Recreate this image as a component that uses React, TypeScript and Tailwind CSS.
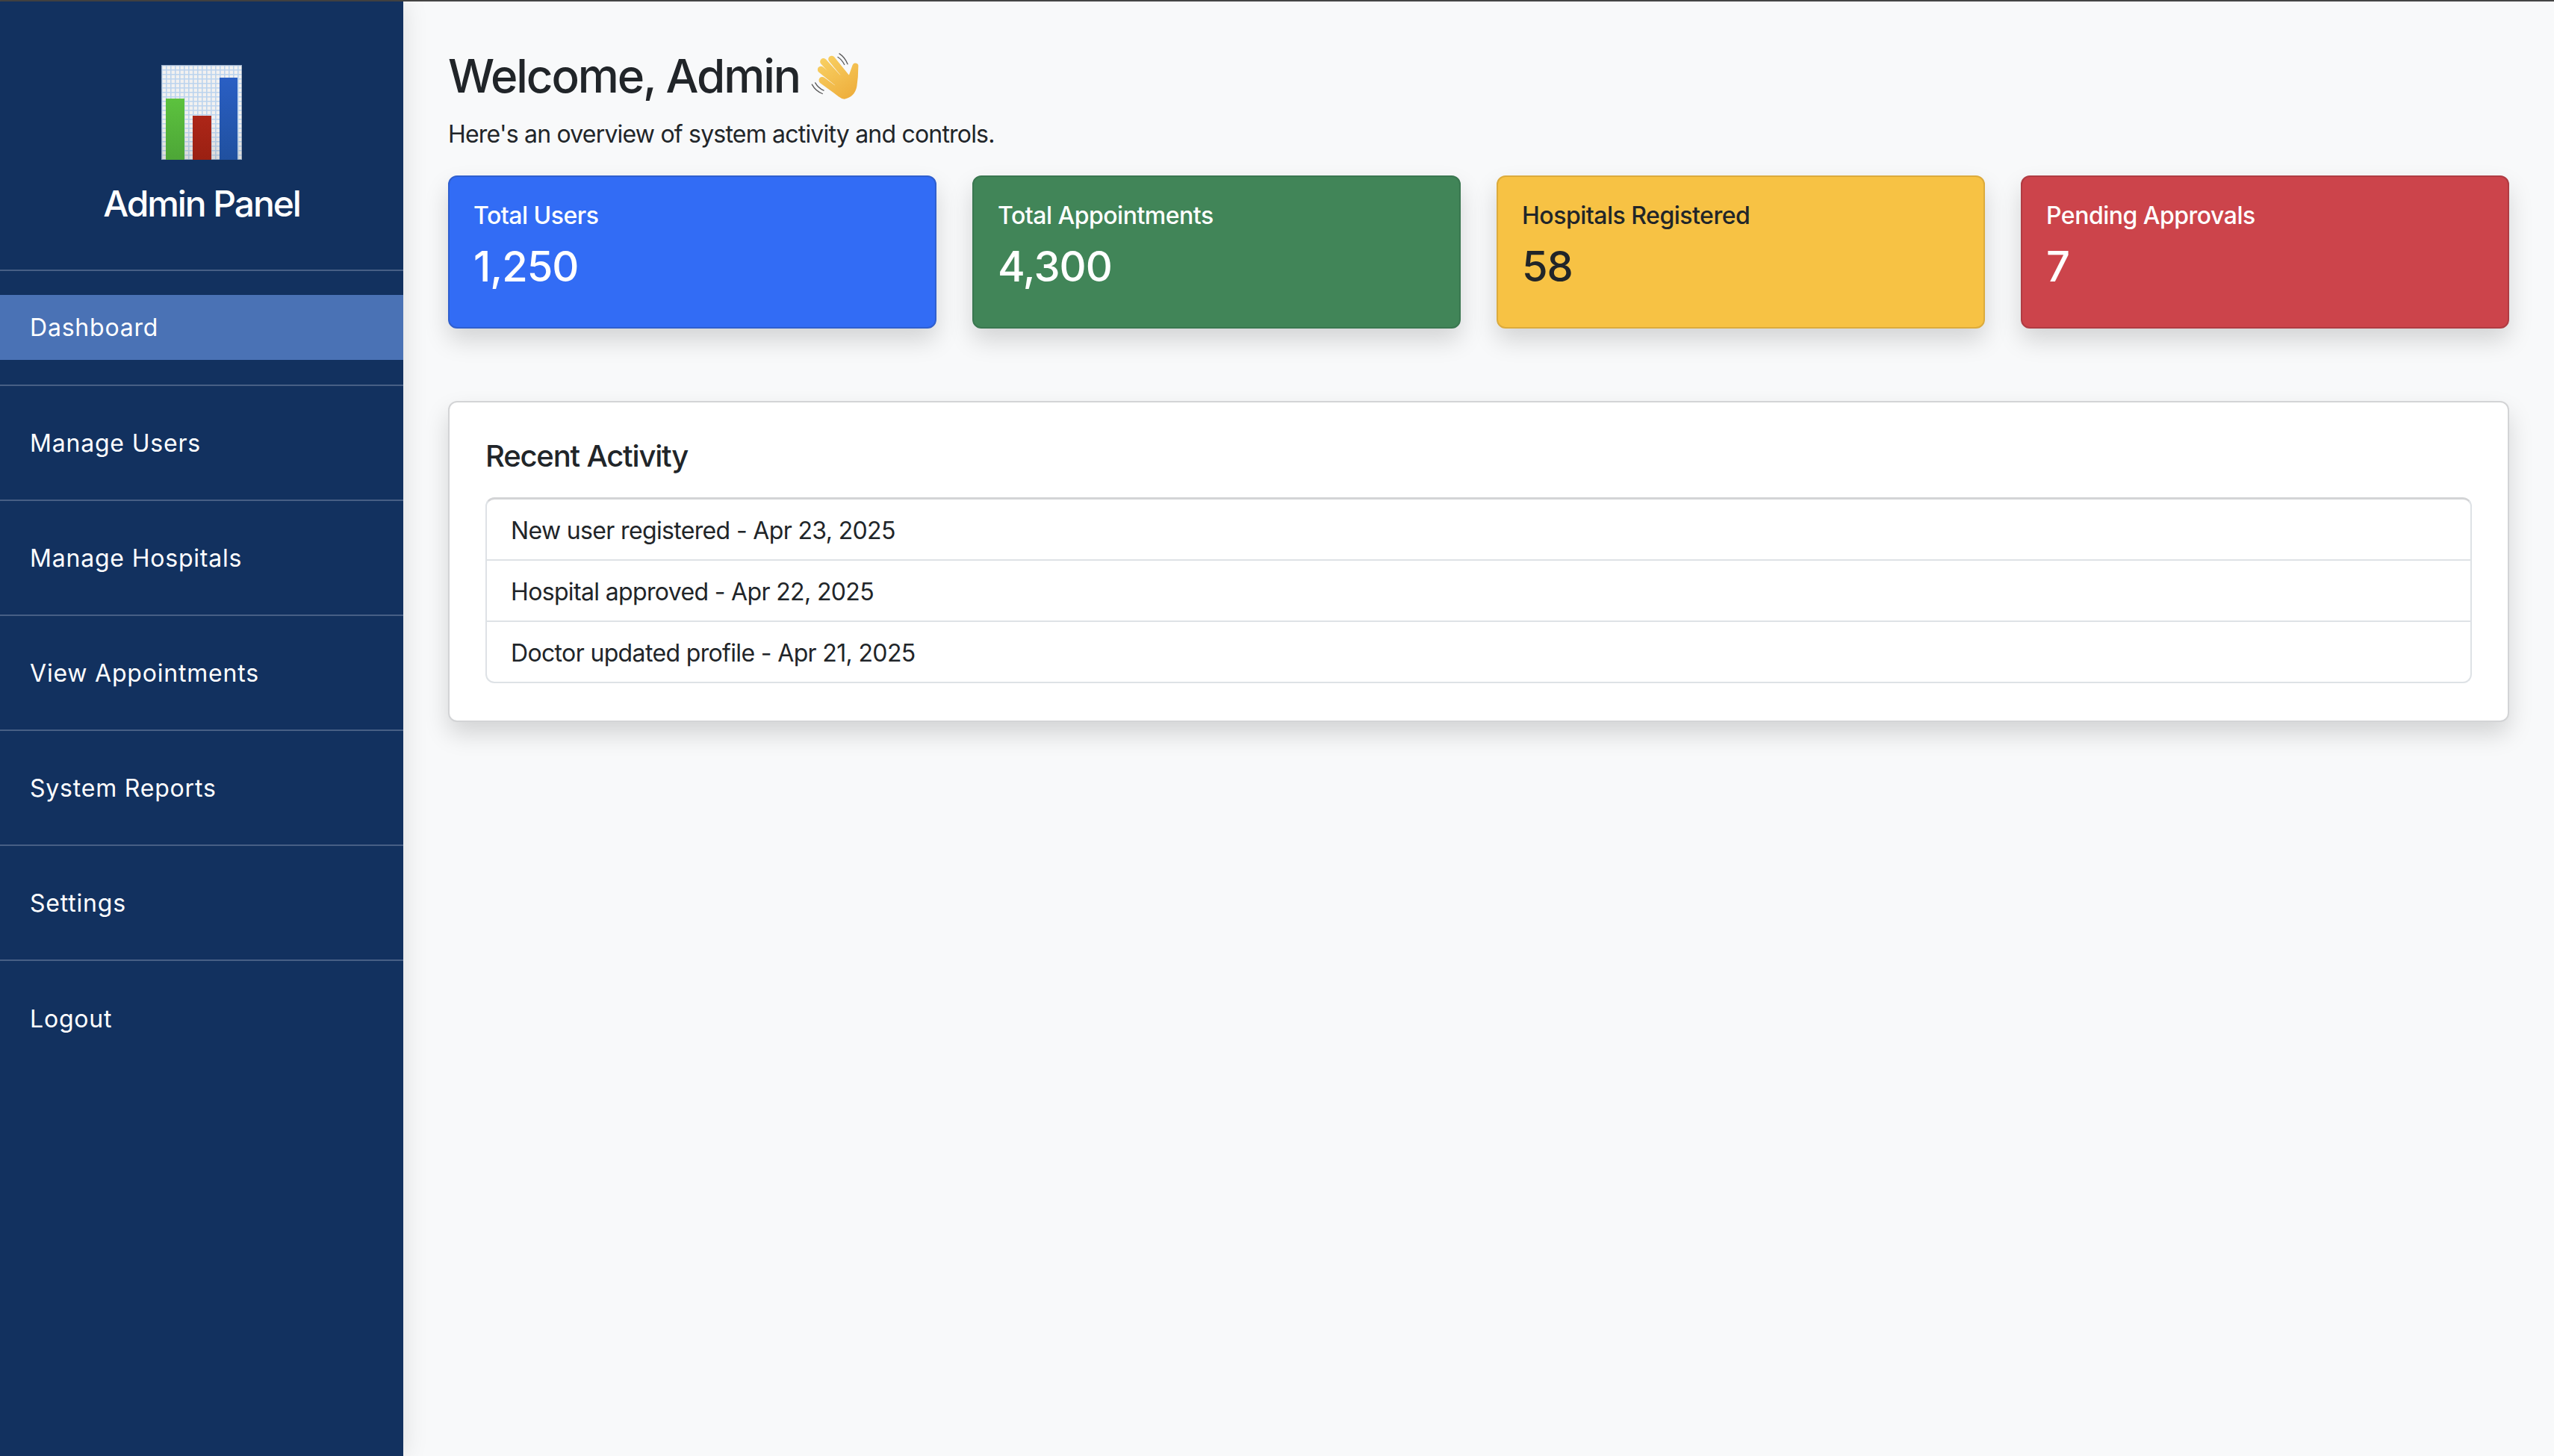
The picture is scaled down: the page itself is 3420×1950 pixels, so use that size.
const navItems = ["Manage Users", "Manage Hospitals", "View Appointments", "System Reports", "Settings", "Logout"];

const stats = [
  { label: "Total Users", value: "1,250", box: "bg-[#326cf5] border-[#2f5fcf] text-white" },
  { label: "Total Appointments", value: "4,300", box: "bg-[#418558] border-[#3a7750] text-white" },
  { label: "Hospitals Registered", value: "58", box: "bg-[#f7c244] border-[#dcab3c] text-[#212529]" },
  { label: "Pending Approvals", value: "7", box: "bg-[#cc444b] border-[#b03c43] text-white" },
];

const activity = [
  "New user registered - Apr 23, 2025",
  "Hospital approved - Apr 22, 2025",
  "Doctor updated profile - Apr 21, 2025",
];

function ChartLogo() {
  return (
    <svg width="108" height="127" viewBox="0 0 108 127">
      <defs>
        <pattern id="grid" width="6" height="6" patternUnits="userSpaceOnUse">
          <rect width="6" height="6" fill="#f2f1f0" />
          <path d="M0 .8H6M.8 0V6" stroke="#bcd4ee" strokeWidth="1.6" />
        </pattern>
        <linearGradient id="paper" x1="0" y1="0" x2="0" y2="1">
          <stop offset="0.6" stopColor="#000" stopOpacity="0" />
          <stop offset="1" stopColor="#000" stopOpacity="0.1" />
        </linearGradient>
        <linearGradient id="green" x1="0" y1="0" x2="0" y2="1">
          <stop offset="0" stopColor="#5cc23e" />
          <stop offset="1" stopColor="#4da637" />
        </linearGradient>
        <linearGradient id="red" x1="0" y1="0" x2="0" y2="1">
          <stop offset="0" stopColor="#ad2618" />
          <stop offset="1" stopColor="#9a2012" />
        </linearGradient>
        <linearGradient id="blue" x1="0" y1="0" x2="0" y2="1">
          <stop offset="0" stopColor="#2a5fc4" />
          <stop offset="1" stopColor="#20509f" />
        </linearGradient>
      </defs>
      <rect width="108" height="127" fill="url(#grid)" />
      <rect width="108" height="127" fill="url(#paper)" />
      <rect x="0.5" y="0.5" width="107" height="126" fill="none" stroke="#7f93ad" strokeOpacity="0.6" />
      <rect x="6" y="45" width="25" height="82" fill="url(#green)" />
      <rect x="42" y="68" width="25" height="59" fill="url(#red)" />
      <rect x="78" y="17" width="24" height="110" fill="url(#blue)" />
    </svg>
  );
}

function WaveHand() {
  return (
    <svg width="70" height="67" viewBox="130 50 210 200">
      <defs>
        <linearGradient id="skin" gradientUnits="userSpaceOnUse" x1="180" y1="80" x2="290" y2="240">
          <stop offset="0" stopColor="#f8cf62" />
          <stop offset="1" stopColor="#eeae3c" />
        </linearGradient>
      </defs>
      <g fill="none" stroke="#5a5a5a" strokeWidth="4" strokeLinecap="round">
        <path d="M250 58Q272 72 283 100" />
        <path d="M244 72Q260 82 270 102" />
        <path d="M140 182Q154 208 182 219" />
        <path d="M153 175Q165 196 187 206" />
      </g>
      <g fill="none" stroke="url(#skin)" strokeWidth="27" strokeLinecap="round">
        <path d="M181 165L245 212" />
        <path d="M176 122L245 178" />
        <path d="M186 90L254 165" />
        <path d="M219 80L276 150" />
        <path d="M314 108Q306 130 296 160" strokeWidth="24" />
      </g>
      <path
        d="M222 205L262 128L292 146Q300 130 305 118L326 110Q326 150 320 190Q312 232 270 241Q246 238 222 205Z"
        fill="url(#skin)"
      />
    </svg>
  );
}

export default function App() {
  return (
    <div className="min-h-screen flex flex-col bg-[#f8f9fa] text-[#212529] font-['Inter',sans-serif]">
      <div className="h-[2px] bg-[#444444]" />
      <div className="flex flex-1">
        {/* Sidebar */}
        <aside className="relative z-10 w-[540px] shrink-0 bg-[#12315f] text-white shadow-[0_0_32px_rgba(0,0,0,0.12)]">
          <div className="h-[361px] border-b-2 border-[#475f85] pt-[85px] flex flex-col items-center">
            <ChartLogo />
            <h4 className="mt-[31px] text-[48px] leading-[56px] font-medium tracking-[-2.1px]">Admin Panel</h4>
          </div>
          <ul>
            <li className="h-[154px] pt-[32px] border-b-2 border-[#475f85]">
              <a className="h-[87px] px-10 flex items-center bg-[#4a72b5] text-[32px] tracking-[0.8px]">Dashboard</a>
            </li>
            {navItems.map((item) => (
              <li key={item} className="h-[154px] px-10 pt-[1px] flex items-center border-b-2 border-[#475f85] last:border-b-0 text-[32px] tracking-[0.8px]">
                {item}
              </li>
            ))}
          </ul>
        </aside>

        {/* Main content */}
        <main className="flex-1 px-[60px] pt-[65px]">
          <div className="flex items-center h-[70px]">
            <h2 className="text-[62px] leading-[70px] font-medium tracking-[-2.1px]">Welcome, Admin</h2>
            <span className="ml-[13px]"><WaveHand /></span>
          </div>
          <p className="mt-[23px] text-[32px] leading-[40px] tracking-[-0.8px]">Here's an overview of system activity and controls.</p>

          <div className="mt-[35px] grid grid-cols-4 gap-[48px]">
            {stats.map((s) => (
              <div key={s.label} className={`h-[205px] rounded-[12px] border-2 px-[32px] pt-[30px] shadow-[0_16px_32px_rgba(0,0,0,0.15)] ${s.box}`}>
                <div className="text-[32px] leading-[44px] font-medium tracking-[-0.5px]">{s.label}</div>
                <div className="mt-[10px] text-[56px] leading-[72px] font-medium tracking-[-1px]">{s.value}</div>
              </div>
            ))}
          </div>

          <div className="mt-[97px] h-[430px] rounded-[12px] border-2 border-[#d3d4d6] bg-white px-[48px] pt-[44px] shadow-[0_16px_32px_rgba(0,0,0,0.15)]">
            <h5 className="text-[40px] leading-[56px] font-medium tracking-[-1.2px]">Recent Activity</h5>
            <ul className="mt-[27px] rounded-[12px] border-2 border-[#dee2e6] border-t-[3px] border-t-[#d3d4d6]">
              {activity.map((a) => (
                <li key={a} className="h-[82px] last:h-[80px] px-[32px] pt-[3px] flex items-center border-b-2 border-[#dee2e6] last:border-b-0 text-[32px] tracking-[-0.65px]">
                  {a}
                </li>
              ))}
            </ul>
          </div>
        </main>
      </div>
    </div>
  );
}
